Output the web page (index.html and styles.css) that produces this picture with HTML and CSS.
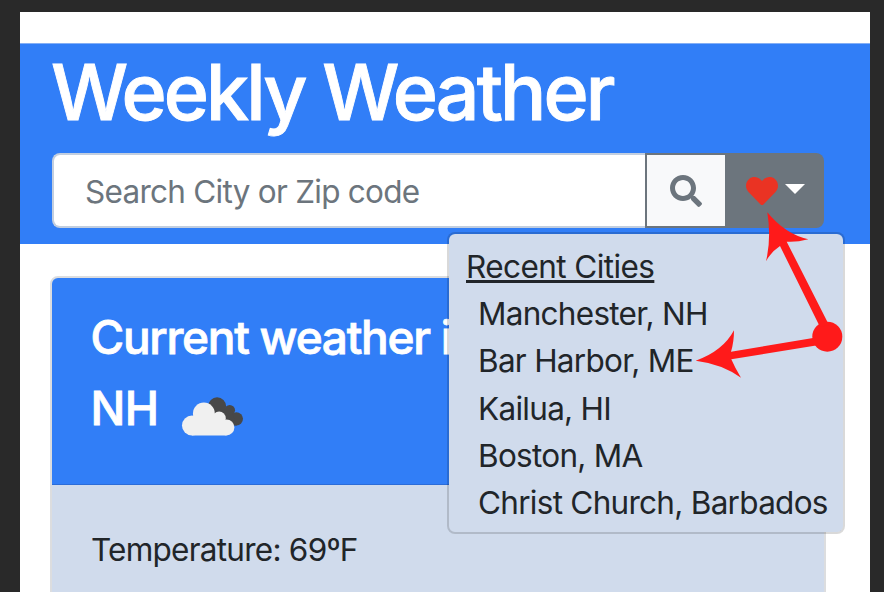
FILE: index.html
```
<!DOCTYPE html>
<html lang="en">
<head>
<meta charset="utf-8">
<title>Weekly Weather</title>
<link rel="stylesheet" href="styles.css">
</head>
<body>
<div class="page">
  <header class="hero">
    <h1 class="title">Weekly Weather</h1>
    <div class="search">
      <div class="field">Search City or Zip code</div>
      <button class="find" aria-label="Search">
        <svg class="icon" viewBox="0 0 512 512"><path fill="#6c757d" d="M505 442.700 405.300 343c-4.500-4.500-10.600-7-17-7H372c27.600-35.300 44-79.700 44-128C416 93.100 322.900 0 208 0S0 93.100 0 208s93.100 208 208 208c48.300 0 92.700-16.400 128-44v16.300c0 6.400 2.500 12.500 7 17l99.700 99.700c9.400 9.400 24.600 9.400 33.900 0l28.300-28.300c9.400-9.400 9.400-24.600.1-34zM208 336c-70.700 0-128-57.200-128-128 0-70.700 57.200-128 128-128 70.700 0 128 57.200 128 128 0 70.700-57.200 128-128 128z"/></svg>
      </button>
      <div class="saved">
        <button class="toggle" aria-label="Recent cities">
          <svg class="icon" viewBox="0 0 512 512"><path fill="#ea3323" d="M462.300 62.600C407.500 15.900 326 24.300 275.700 76.200L256 96.500l-19.700-20.300C186.100 24.300 104.500 15.900 49.700 62.600c-62.800 53.600-66.100 149.800-9.900 207.900l193.500 199.800c12.500 12.900 32.800 12.900 45.300 0l193.500-199.800c56.300-58.100 53-154.300-9.800-207.900z"/></svg>
          <span class="caret"></span>
        </button>
        <div class="menu">
          <div class="menu-title">Recent Cities</div>
          <div class="city">Manchester, NH</div>
          <div class="city">Bar Harbor, ME</div>
          <div class="city">Kailua, HI</div>
          <div class="city">Boston, MA</div>
          <div class="city">Christ Church, Barbados</div>
        </div>
      </div>
    </div>
  </header>
  <section class="card">
    <div class="card-head">
      <h2>Current weather i<br><span class="state">NH</span>
        <svg class="cloud" viewBox="62 48 190 122"><g fill="#484848"><circle cx="171" cy="78" r="27"/><circle cx="209" cy="90" r="16"/><circle cx="229" cy="116" r="20"/><path d="M160 90h55l15 46h-45z"/></g><g fill="#f0f0f0"><circle cx="95" cy="136" r="30"/><circle cx="131" cy="100" r="33"/><circle cx="177" cy="114" r="20"/><circle cx="199" cy="142" r="24"/><path d="M95 166V115h90l14 51z"/></g></svg>
      </h2>
    </div>
    <div class="card-body">Temperature: 69ºF</div>
  </section>
</div>
<svg class="pointer" viewBox="0 0 884 592" fill="#ff1a1a"><circle cx="827.3" cy="336.700" r="15"/><path d="M767.300 212.300Q785 234 808.300 239.300Q796 242.500 786.700 241.700L829 325L820 327L780 246Q771 252 766 261.300Q771.500 238 767.300 212.300Z"/><path d="M695.700 360.700Q723 351 734 330.300Q734 342 731 351.700L816 337.500V345.500L731.300 359.300Q735 368 741 377.700Q722 364 695.700 360.700Z"/></svg>
</body>
</html>
```
FILE: styles.css
```
* { box-sizing: border-box; }
html { overflow: hidden; }
body {
  margin: 0;
  height: 592px;
  padding: 12px 14px 0 20px;
  overflow: hidden;
  background: #292929;
  color: #212529;
  font-family: Inter, "Liberation Sans", sans-serif;
  font-size: 31.500px;
  letter-spacing: -0.72px;
}
.page { height: 580px; padding-top: 31px; background: #fff; overflow: hidden; }
.hero { height: 201px; padding: 0 46px 0 32px; background: #317ef7; border-top: 1px solid #84aff5; }
.title { margin: 0 0 0 -1px; height: 109px; color: #fff; font-size: 77px; font-weight: 500; line-height: 96px; letter-spacing: -2.9px; white-space: nowrap; -webkit-text-stroke: 0.9px #fff; }
.search { display: flex; height: 75px; }
.field { flex: 1; padding-left: 31px; line-height: 73px; letter-spacing: -0.73px; color: #6c757d; background: #fff; border: 2px solid #c2cedf; border-right: 0; border-radius: 8px 0 0 8px; }
button { display: flex; align-items: center; justify-content: center; margin: 0; padding: 0; border: 0; }
.find { width: 81px; background: #f8f9fa; border: 2px solid #6c757d; border-right-width: 1px; }
.icon { width: 32px; height: 32px; }
.saved { position: relative; width: 98px; }
.toggle { width: 98px; height: 75px; gap: 7px; background: #6c757d; border-radius: 0 8px 8px 0; }
.caret { margin-top: -3px; border: 10px solid transparent; border-top-color: #fff; border-bottom: 0; }
.menu { position: absolute; top: 79px; right: -21px; width: 398px; height: 302px; padding: 9px 17px; background: #d0dbec; border: 2px solid rgba(0, 0, 0, .15); background-clip: padding-box; border-radius: 8px; line-height: 47.200px; white-space: nowrap; }
.menu-title { letter-spacing: -0.58px; text-decoration: underline; }
.city { padding-left: 12px; }
.card { margin: 32px 44px 0 30px; height: 400px; border: 2px solid #dcdddf; border-radius: 8px; background: #d0dbec; overflow: hidden; }
.card-head { height: 207px; padding: 24px 0 0 38.500px; background: #317ef7; border-bottom: 1px solid #2b6cd8; color: #fff; }
h2 { margin: 0; font-size: 46px; font-weight: 500; line-height: 71px; letter-spacing: -1.28px; white-space: nowrap; -webkit-text-stroke: 0.8px #fff; }
.state { letter-spacing: -0.5px; }
.cloud { width: 63px; height: 41px; margin-left: 11px; vertical-align: -12px; }
.card-body { padding: 41px 39px; line-height: 47px; letter-spacing: -0.75px; }
.pointer { position: absolute; left: 0; top: 0; width: 884px; height: 592px; pointer-events: none; }
```
